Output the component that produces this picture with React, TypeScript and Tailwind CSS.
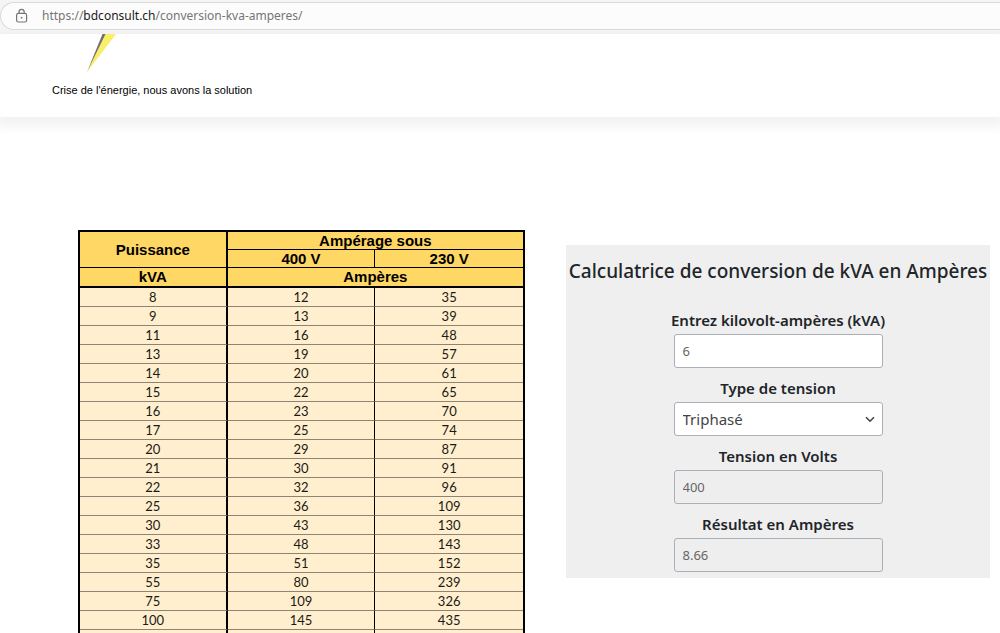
import { useState } from "react";
import type { ReactNode } from "react";

const ROWS = [
  [8, 12, 35],
  [9, 13, 39],
  [11, 16, 48],
  [13, 19, 57],
  [14, 20, 61],
  [15, 22, 65],
  [16, 23, 70],
  [17, 25, 74],
  [20, 29, 87],
  [21, 30, 91],
  [22, 32, 96],
  [25, 36, 109],
  [30, 43, 130],
  [33, 48, 143],
  [35, 51, 152],
  [55, 80, 239],
  [75, 109, 326],
  [100, 145, 435],
];

function AddressBar() {
  return (
    <div className="bg-[#f5f5f5] pt-0.5 pb-1">
      <div className="flex h-7 items-center gap-3 rounded-l-full border border-r-0 border-[#dadada] bg-[#fcfcfc] pl-[13px] text-[12px] text-[#757575]">
        <svg className="size-4" viewBox="0 0 16 16" fill="none" stroke="#757575" strokeWidth="1.2">
          <rect x="2.6" y="5.4" width="10" height="8.6" rx="1.8" />
          <path d="M5 5.2V4a2.6 2.6 0 0 1 5.2 0v1.2" />
          <circle cx="7.6" cy="9.7" r="0.9" fill="#757575" stroke="none" />
        </svg>
        <span>
          https://<span className="text-[#1b1b1b]">bdconsult.ch</span>/conversion-kva-amperes/
        </span>
      </div>
    </div>
  );
}

function SiteHeader() {
  return (
    <header className="bg-white pb-[19px] pl-[52px] shadow-[0_6px_10px_4px_rgba(0,0,0,0.05)]">
      <svg className="ml-8 h-10 w-8" viewBox="0 0 32 40">
        <path d="M20 0h12L3 38z" fill="#f8ee6a" />
        <path d="M18.5 0h3L3 38z" fill="#6f6f73" />
      </svg>
      <p className="pt-2 font-['Liberation_Sans',sans-serif] text-[11px] leading-4 text-black">
        Crise de l'énergie, nous avons la solution
      </p>
    </header>
  );
}

function ConversionTable() {
  return (
    <table className="w-full table-fixed border-separate border-spacing-0 border-2 border-black bg-[#ffefce] text-center text-black">
      <thead className="bg-[#ffd764] font-['Liberation_Sans',sans-serif] text-[15px] leading-4">
        <tr className="h-[18px]">
          <th rowSpan={2} className="border-r-2 border-b border-black p-0">Puissance</th>
          <th colSpan={2} className="border-b border-black p-0">Ampérage sous</th>
        </tr>
        <tr className="h-[18px]">
          <th className="border-r border-b border-black p-0">400 V</th>
          <th className="border-b border-black p-0">230 V</th>
        </tr>
        <tr className="h-5">
          <th className="border-r-2 border-b-2 border-black p-0">kVA</th>
          <th colSpan={2} className="border-b-2 border-black p-0">Ampères</th>
        </tr>
      </thead>
      <tbody className="font-['Lato',sans-serif] text-[13px] leading-4 text-[#1c1a16]">
        {ROWS.map(([kva, a400, a230]) => (
          <tr key={kva} className="h-[19px]">
            <td className="border-r-2 border-b border-r-black border-b-[#8d8474] p-0">{kva}</td>
            <td className="border-r border-b border-r-black border-b-[#8d8474] p-0">{a400}</td>
            <td className="border-b border-b-[#8d8474] p-0">{a230}</td>
          </tr>
        ))}
        <tr className="h-[19px]">
          <td className="border-r-2 border-black p-0"></td>
          <td className="border-r border-black p-0"></td>
          <td className="p-0"></td>
        </tr>
      </tbody>
    </table>
  );
}

function Field({ id, label, children }: { id: string; label: string; children: ReactNode }) {
  return (
    <div className="flex w-full flex-col items-center">
      <label htmlFor={id} className="pt-1 pb-0.5 text-[15px] leading-6 font-semibold text-[#212529]">
        {label}
      </label>
      {children}
    </div>
  );
}

const fieldClass =
  "h-[34px] w-[209px] rounded-[3px] border border-[#a9b0b8] px-2 text-[13px] text-[#666]";

function Calculator() {
  const [kva, setKva] = useState("6");
  const [type, setType] = useState("tri");

  const volts = type === "tri" ? 400 : 230;
  const divisor = type === "tri" ? Math.sqrt(3) * volts : volts;
  const amps = ((Number(kva) * 1000) / divisor).toFixed(2);

  return (
    <form className="flex flex-col items-center bg-[#efefef] pt-3 pb-1.5">
      <h2 className="text-[19px] leading-7 font-medium whitespace-nowrap text-[#212529]">
        Calculatrice de conversion de kVA en Ampères
      </h2>
      <div className="flex w-full flex-col items-center gap-1 pt-[19px]">
        <Field id="kva" label="Entrez kilovolt-ampères (kVA)">
          <input id="kva" value={kva} onChange={(e) => setKva(e.target.value)} className={`${fieldClass} bg-white`} />
        </Field>
        <Field id="type" label="Type de tension">
          <div className="relative">
            <select
              id="type"
              value={type}
              onChange={(e) => setType(e.target.value)}
              className="block h-[34px] w-[209px] appearance-none rounded-[3px] border border-[#a9b0b8] bg-white px-2 text-[15px] text-[#444]"
            >
              <option value="tri">Triphasé</option>
              <option value="mono">Monophasé</option>
            </select>
            <svg className="pointer-events-none absolute top-3 right-2 size-2.5" viewBox="0 0 10 10" fill="none" stroke="#444" strokeWidth="1.6">
              <path d="M1 3.2l4 4 4-4" />
            </svg>
          </div>
        </Field>
        <Field id="volts" label="Tension en Volts">
          <input id="volts" value={volts} readOnly className={`${fieldClass} bg-[#eee]`} />
        </Field>
        <Field id="amps" label="Résultat en Ampères">
          <input id="amps" value={amps} readOnly className={`${fieldClass} bg-[#eee]`} />
        </Field>
      </div>
    </form>
  );
}

export default function App() {
  return (
    <div className="h-screen overflow-hidden bg-white font-['Noto_Sans','Open_Sans',sans-serif]">
      <AddressBar />
      <SiteHeader />
      <main className="flex items-start gap-[41px] pt-[113px] pr-2.5 pl-[78px]">
        <section className="flex-1">
          <ConversionTable />
        </section>
        <section className="w-[424px] pt-[15px]">
          <Calculator />
        </section>
      </main>
    </div>
  );
}
